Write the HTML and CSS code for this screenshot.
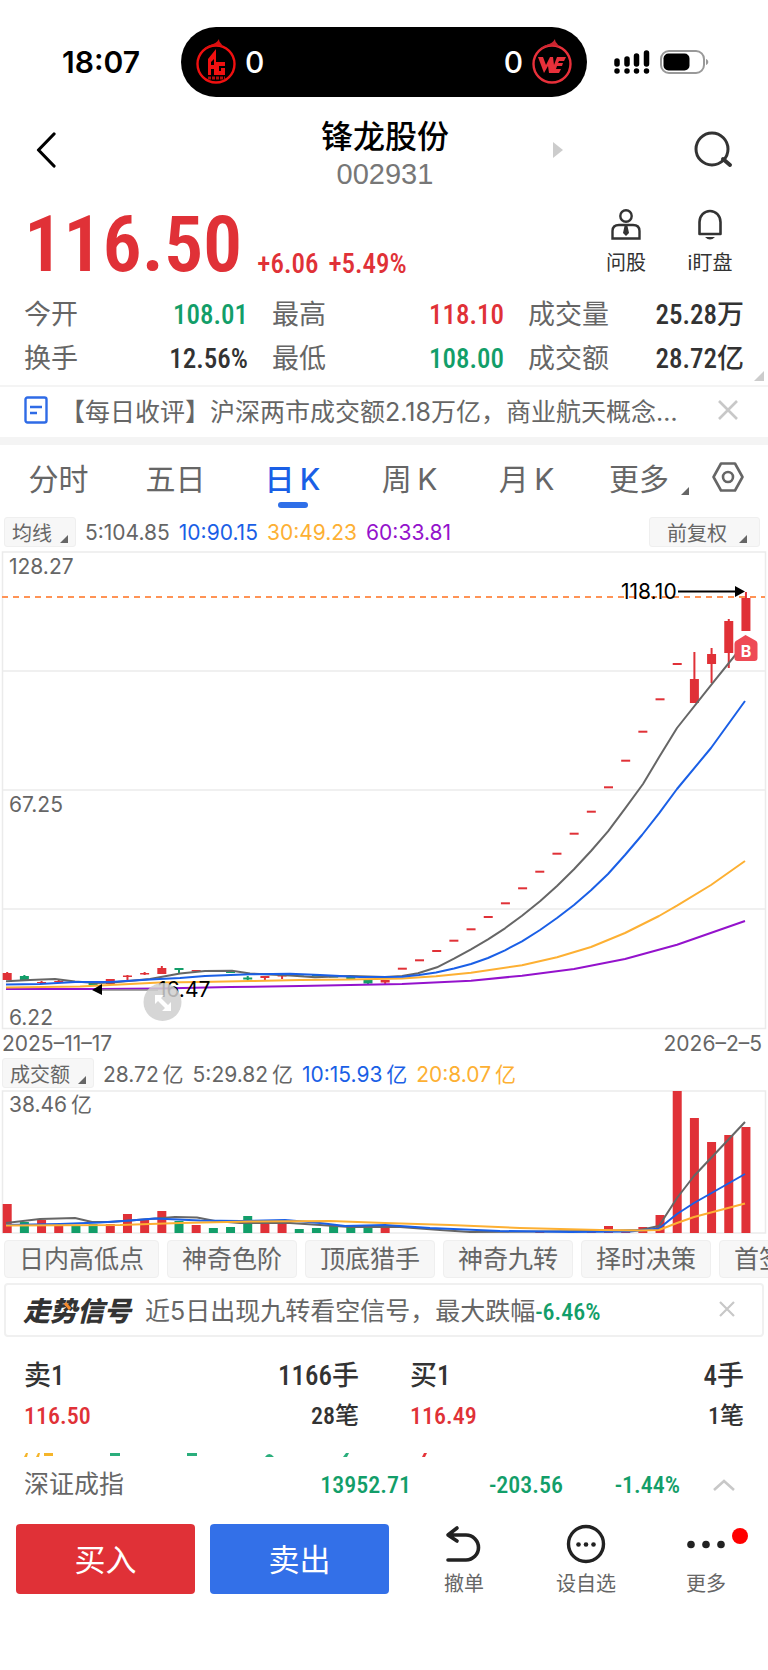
FILE: index.html
```html
<!DOCTYPE html>
<html lang="zh-CN">
<head>
  <meta charset="UTF-8">
  <meta name="viewport" content="width=device-width, initial-scale=1.0">
  <title>锋龙股份 002931</title>
  <link rel="stylesheet" href="styles.css">
</head>
<body>
  <div class="status-bar">
    <div class="time">18:07</div>
    <div class="island">
      <svg class="team" viewBox="0 0 42 46">
        <circle cx="21" cy="25" r="18.5" fill="none" stroke="#f01010" stroke-width="2.4"/>
        <path d="M8 11C14 4 20 7 24 0c0 4 3 4 4 8-7-3-13-1-20 3z" fill="#d80f0f"/>
        <path d="M13 36V20l8-10v13h9v4h-6v5h2v-3h4v7H19v-6h-3v6zM16 26h3v-6l-3 3z" fill="#f01010"/>
        <path d="M13 39h17" stroke="#b00c0c" stroke-width="3" stroke-dasharray="3 1"/>
      </svg>
      <span>0</span>
      <span class="score-right">0</span>
      <svg class="team" viewBox="0 0 42 46">
        <circle cx="21" cy="25" r="18.5" fill="none" stroke="#e8303a" stroke-width="2.4"/>
        <path d="M8 11C14 4 20 7 24 0c0 4 3 4 4 8-7-3-13-1-20 3z" fill="#c92530"/>
        <path d="M7 18h5l3 8 4-8h3l1 8 3-8h9l-2 4h-5l-1 2h5l-1 3h-5l-1 3h5l-2 4H18l-1-7-4 7z" fill="#e8303a"/>
      </svg>
    </div>
    <div class="indicators">
      <svg class="signal" viewBox="0 0 36 24">
        <path d="M3 11v3M13 9v5M22.500 6v8M32.500 3v11M3 21v0M13 21v0M22.500 21v0M32.500 21v0" stroke="#000" stroke-width="5.500" stroke-linecap="round"/>
      </svg>
      <svg class="battery" viewBox="0 0 50 24">
        <rect x="1" y="1" width="43" height="22" rx="8" fill="none" stroke="#999" stroke-width="2"/>
        <rect x="3.500" y="3.500" width="26" height="17" rx="5" fill="#000"/>
        <path d="M46 9c3 1 3 5 0 6z" fill="#999"/>
      </svg>
    </div>
  </div>

  <header class="header">
    <button class="icon-btn back" aria-label="返回">
      <svg width="20" height="36" viewBox="0 0 20 36"><path d="M18 2 2.500 18 18 34" fill="none" stroke="#000" stroke-width="3.200" stroke-linecap="round" stroke-linejoin="round"/></svg>
    </button>
    <div class="title">
      <h1>锋龙股份</h1>
      <div class="code">002931</div>
    </div>
    <div class="header-right">
      <button class="icon-btn" aria-label="下一只"><svg width="10" height="16" viewBox="0 0 10 16"><path d="M0 0 10 8 0 16z" fill="#ccc"/></svg></button>
      <button class="icon-btn" aria-label="搜索">
        <svg width="40" height="38" viewBox="0 0 40 38"><circle cx="18" cy="18" r="16" fill="none" stroke="#333" stroke-width="3"/><path d="m29 28 7 6" stroke="#333" stroke-width="4" stroke-linecap="round"/></svg>
      </button>
    </div>
  </header>

  <section class="quote">
    <div class="price up">116.50</div>
    <div class="change up"><span>+6.06</span><span>+5.49%</span></div>
    <button class="quick">
      <svg width="30" height="32" viewBox="0 0 30 32"><g fill="none" stroke="#333" stroke-width="2.400"><circle cx="15" cy="7" r="5.700"/><path d="M8 16h14q6.500 0 6.500 6v7.500h-27V22q0-6 6.500-6z"/></g><path d="M13.500 17h3l1.500 7-3 3-3-3z" fill="#333"/></svg>
      问股
    </button>
    <button class="quick">
      <svg width="26" height="32" viewBox="0 0 26 32"><path d="M2.500 25V13a10.500 11 0 0 1 21 0v12z" fill="none" stroke="#333" stroke-width="2.600" stroke-linejoin="round"/><path d="M8 28h10q-5 5-10 0z" fill="#333"/></svg>
      i盯盘
    </button>
  </section>

  <dl class="stats">
    <div><dt>今开</dt><dd class="down">108.01</dd></div>
    <div><dt>最高</dt><dd class="up">118.10</dd></div>
    <div><dt>成交量</dt><dd>25.28万</dd></div>
    <div><dt>换手</dt><dd>12.56%</dd></div>
    <div><dt>最低</dt><dd class="down">108.00</dd></div>
    <div class="expandable"><dt>成交额</dt><dd>28.72亿</dd></div>
  </dl>

  <div class="news">
    <svg width="24" height="28" viewBox="0 0 24 28"><rect x="1.500" y="1.500" width="21" height="25" rx="2" fill="none" stroke="#2f6be6" stroke-width="2.400"/><path d="M6 11h12M6 17h7" stroke="#2f6be6" stroke-width="2.400"/></svg>
    <a href="#news">【每日收评】沪深两市成交额2.18万亿，商业航天概念…</a>
    <button class="icon-btn" aria-label="关闭"><svg width="20" height="20" viewBox="0 0 20 20"><path d="m1 1 18 18M19 1 1 19" stroke="#c8c8c8" stroke-width="2.600"/></svg></button>
  </div>

  <nav class="tabs">
    <button>分时</button>
    <button>五日</button>
    <button class="active">日&thinsp;K</button>
    <button>周&thinsp;K</button>
    <button>月&thinsp;K</button>
    <button class="more">更多<i class="corner"></i></button>
    <button class="settings" aria-label="设置">
      <svg width="32" height="30" viewBox="0 0 32 30"><path d="M9 1.500h14L30.500 15 23 28.500H9L1.500 15z" fill="none" stroke="#666" stroke-width="2.600" stroke-linejoin="round"/><circle cx="16" cy="15" r="5" fill="none" stroke="#666" stroke-width="2.600"/></svg>
    </button>
  </nav>

  <div class="legend">
    <button class="picker">均线<i class="corner"></i></button>
    <span>5:104.85</span>
    <span class="blue">10:90.15</span>
    <span class="orange">30:49.23</span>
    <span class="purple">60:33.81</span>
    <button class="picker adjust">前复权<i class="corner"></i></button>
  </div>

  <div class="chart">
    <svg id="kline" viewBox="0 551 768 479">
      <g fill="none" stroke="#ebebeb" stroke-width="1.500">
        <rect x="2.500" y="552" width="763" height="476.500"/>
        <path d="M2 671h763M2 790h763M2 909h763"/>
      </g>
      <path d="M2 597h763" stroke="#ff9355" stroke-width="2" stroke-dasharray="6 5"/>
      <g id="candles"></g>
      <g id="averages" class="lines"></g>
      <g class="axis">
        <text x="9" y="574">128.27</text>
        <text x="9" y="812">67.25</text>
        <text x="9" y="1025">6.22</text>
      </g>
      <g class="extreme">
        <text x="621" y="599">118.10</text>
        <path d="M678 591.500h58" stroke="#000" stroke-width="2"/>
        <path d="m735 586 10 5.500-10 5.500z"/>
        <path d="M102 990h56" stroke="#888" stroke-width="1.500"/>
        <path d="m92 990 10-6v11z"/>
        <text x="158" y="997">16.47</text>
      </g>
      <path d="m745.500 635 9 5q3 1 3 4v14q0 3-3 3h-17q-3 0-3-3v-14q0-3 3-4z" fill="#ee4a55"/>
      <text class="mark" x="746" y="657">B</text>
      <g opacity=".85">
        <circle cx="162.500" cy="1002" r="19" fill="#cfcfcf"/>
        <path d="M155 995h9l-3 3 7 7 3-3v9h-9l3-3-7-7-3 3z" fill="#fff"/>
      </g>
    </svg>
    <div class="dates"><span>2025–11–17</span><span>2026–2–5</span></div>
  </div>

  <div class="legend volume-legend">
    <button class="picker">成交额<i class="corner"></i></button>
    <span>28.72&thinsp;亿</span>
    <span>5:29.82&thinsp;亿</span>
    <span class="blue">10:15.93&thinsp;亿</span>
    <span class="orange">20:8.07&thinsp;亿</span>
  </div>

  <div class="chart">
    <svg id="volume" viewBox="0 1090 768 144">
      <rect x="2.500" y="1091" width="763" height="142" fill="none" stroke="#ebebeb" stroke-width="1.500"/>
      <g id="bars"></g>
      <g id="volumeAverages" class="lines"></g>
      <g class="axis"><text x="9" y="1112">38.46&thinsp;亿</text></g>
    </svg>
  </div>

  <div class="chips">
    <button>日内高低点</button>
    <button>神奇色阶</button>
    <button>顶底猎手</button>
    <button>神奇九转</button>
    <button>择时决策</button>
    <button>首签信号</button>
  </div>

  <div class="signal-card">
    <strong>走势信号</strong>
    <p>近5日出现九转看空信号，最大跌幅<b class="down">-6.46%</b></p>
    <button class="icon-btn" aria-label="关闭"><svg width="16" height="16" viewBox="0 0 16 16"><path d="m1 1 14 14M15 1 1 15" stroke="#c8c8c8" stroke-width="2.200"/></svg></button>
  </div>

  <section class="orders">
    <div class="order">
      <div class="order-top"><span>卖1</span><span>1166手</span></div>
      <div class="order-bottom"><span class="up">116.50</span><span>28笔</span></div>
    </div>
    <div class="order">
      <div class="order-top"><span>买1</span><span>4手</span></div>
      <div class="order-bottom"><span class="up">116.49</span><span>1笔</span></div>
    </div>
  </section>

  <svg class="peek" viewBox="0 0 768 4">
    <path d="m24 4 2-4h2l-1 4zM36 4l2-4h2l-1 4zM44 0h9v3h-9z" fill="#f5b52a"/>
    <path d="M110 0h10v3h-10zM187 0h10v3h-10zM265 4q4-6 9 0zM343 4l3-4h3l-2 4z" fill="#2aae7c"/>
    <path d="m422 4 2-4h3l-2 4z" fill="#e5343a"/>
  </svg>

  <div class="index">
    <span class="index-name">深证成指</span>
    <span class="down">13952.71</span>
    <span class="down">-203.56</span>
    <span class="down">-1.44%</span>
    <button class="icon-btn" aria-label="展开"><svg width="22" height="12" viewBox="0 0 22 12"><path d="m1 11 10-9 10 9" fill="none" stroke="#c8c8c8" stroke-width="2.600"/></svg></button>
  </div>

  <footer class="actions">
    <button class="trade buy">买入</button>
    <button class="trade sell">卖出</button>
    <button class="action">
      <svg width="40" height="40" viewBox="0 0 40 40"><path d="M4 36h18a12.500 12.500 0 0 0 0-25H4m9-7-9 7 9 6" fill="none" stroke="#222" stroke-width="3.600" stroke-linecap="round" stroke-linejoin="round"/></svg>
      撤单
    </button>
    <button class="action">
      <svg width="40" height="40" viewBox="0 0 40 40"><circle cx="20" cy="20" r="17.500" fill="none" stroke="#222" stroke-width="3.400"/><g fill="#222"><circle cx="12.500" cy="20.500" r="2.300"/><circle cx="20" cy="20.500" r="2.300"/><circle cx="27.500" cy="20.500" r="2.300"/></g></svg>
      设自选
    </button>
    <button class="action">
      <svg width="40" height="40" viewBox="0 0 40 40"><g fill="#222"><circle cx="5" cy="20.500" r="3.800"/><circle cx="20" cy="20.500" r="3.800"/><circle cx="35" cy="20.500" r="3.800"/></g></svg>
      更多
      <i class="badge"></i>
    </button>
  </footer>

  <script src="chart.js"></script>
</body>
</html>
```
FILE: styles.css
```css
* {
  box-sizing: border-box;
}

body {
  margin: 0;
  background: #fff;
  color: #333;
  font-family: Inter, "Noto Sans CJK SC", sans-serif;
  overflow-x: hidden;
}

button {
  margin: 0;
  padding: 0;
  border: none;
  background: none;
  color: inherit;
  font: inherit;
  cursor: pointer;
}

svg {
  display: block;
}

.up {
  color: #e03137;
}

.down {
  color: #129e69;
}

.icon-btn {
  display: flex;
}

/* status bar */
.status-bar {
  display: grid;
  grid-template-columns: 1fr 406px 1fr;
  align-items: center;
  padding: 27px 0 10px;
  color: #000;
}

.time {
  padding-left: 62px;
  font-size: 30px;
  font-weight: 600;
}

.island {
  display: flex;
  align-items: center;
  gap: 8px;
  height: 70px;
  padding: 0 14px;
  border-radius: 35px;
  background: #000;
  color: #fff;
  font-size: 30px;
  font-weight: 500;
}

.team {
  width: 42px;
  height: 46px;
}

.score-right {
  margin-left: auto;
}

.indicators {
  display: flex;
  gap: 10px;
  padding-left: 27px;
}

.signal {
  width: 36px;
  height: 24px;
}

.battery {
  width: 50px;
  height: 24px;
}

/* header */
.header {
  display: grid;
  grid-template-columns: 1fr auto 1fr;
  align-items: center;
  padding: 2px 34px 0 36px;
}

.title {
  padding-top: 8px;
  text-align: center;
}

h1 {
  margin: 0;
  color: #000;
  font-size: 32px;
  font-weight: 500;
  line-height: 40px;
}

.code {
  color: #777;
  font-family: "Liberation Sans", sans-serif;
  font-size: 29px;
  line-height: 34px;
}

.header-right {
  display: flex;
  align-items: center;
  justify-content: space-between;
  padding-left: 104px;
}

/* price */
.quote {
  display: flex;
  align-items: flex-end;
  padding: 10px 16px 4px 24px;
}

.price,
.change,
.stats dd,
.order,
.index,
.signal-card b {
  font-family: "Roboto Condensed", "Liberation Sans Narrow", "Noto Sans CJK SC", sans-serif;
  font-weight: 500;
}

.price {
  font-size: 78px;
  font-weight: 600;
  line-height: 88px;
}

.change {
  display: flex;
  flex: 1;
  gap: 10px;
  padding: 0 0 3px 15px;
  font-size: 27px;
  line-height: 44px;
}

.quick {
  display: flex;
  flex-direction: column;
  align-items: center;
  width: 84px;
  padding-bottom: 10px;
  font-size: 20px;
  line-height: 32px;
}

.quick svg {
  margin-bottom: 6px;
}

/* key numbers */
.stats {
  display: grid;
  grid-template-columns: 224fr 232fr 216fr;
  column-gap: 24px;
  margin: 0;
  padding: 0 24px 4px;
  border-bottom: 2px solid #f4f4f4;
}

.stats div {
  display: flex;
  justify-content: space-between;
  line-height: 44px;
}

.stats dt {
  color: #666;
  font-size: 27px;
}

.stats dd {
  margin: 0;
  font-size: 27px;
}

.expandable {
  position: relative;
}

.expandable::after {
  content: "";
  position: absolute;
  right: -20px;
  bottom: 0;
  border: 5px solid #ccc;
  border-top-color: transparent;
  border-left-color: transparent;
}

/* news line */
.news {
  display: flex;
  align-items: center;
  height: 58px;
  padding: 0 30px 4px 24px;
  border-bottom: 8px solid #f4f4f4;
}

.news a {
  flex: 1;
  padding-left: 12px;
  color: #666;
  font-size: 25px;
  text-decoration: none;
  white-space: nowrap;
}

/* period tabs */
.tabs {
  display: grid;
  grid-template-columns: repeat(6, 117fr) 66fr;
  height: 70px;
}

.tabs button {
  position: relative;
  display: flex;
  align-items: center;
  justify-content: center;
  padding-bottom: 6px;
  color: #666;
  font-size: 30px;
}

.tabs .active {
  color: #1a5fe6;
  font-weight: 500;
}

.active::after {
  content: "";
  position: absolute;
  bottom: 7px;
  width: 30px;
  height: 6px;
  border-radius: 3px;
  background: #2f6fe8;
}

.tabs .more {
  justify-content: flex-start;
  padding-left: 24px;
}

.tabs .settings {
  justify-content: flex-start;
  padding-left: 10px;
}

.corner {
  width: 0;
  height: 0;
  border: 4px solid #666;
  border-top-color: transparent;
  border-left-color: transparent;
}

.tabs .corner {
  align-self: flex-end;
  margin: 0 0 14px 12px;
}

/* average legends */
.legend {
  display: flex;
  align-items: center;
  gap: 9px;
  height: 34px;
  margin-bottom: 2px;
  padding: 0 8px 0 4px;
  color: #666;
  font-size: 21px;
}

.legend .blue {
  color: #1a5fe6;
}

.legend .orange {
  color: #fdb033;
}

.legend .purple {
  color: #9412cc;
}

.picker {
  display: flex;
  align-items: center;
  gap: 8px;
  height: 30px;
  padding: 0 7px;
  border: 1px solid #efefef;
  border-radius: 3px;
  background: #f7f7f7;
  font-size: 20px;
  white-space: nowrap;
}

.picker .corner {
  align-self: flex-end;
  margin-bottom: 3px;
}

.adjust {
  gap: 12px;
  margin-left: auto;
  padding: 0 12px 0 17px;
}

.volume-legend {
  height: 30px;
  padding-left: 2px;
}

/* charts */
.chart svg {
  width: 100%;
}

.lines path {
  fill: none;
  stroke-width: 2;
  stroke-linejoin: round;
}

.axis {
  fill: #666;
  font-size: 21px;
}

.extreme {
  fill: #000;
  font-size: 21px;
}

.mark {
  fill: #fff;
  font-size: 16px;
  font-weight: bold;
  text-anchor: middle;
}

.dates {
  display: flex;
  justify-content: space-between;
  padding: 0 6px 0 2px;
  color: #666;
  font-size: 21px;
  line-height: 28px;
}

/* indicator chips */
.chips {
  display: flex;
  gap: 8px;
  padding: 6px 0 5px 4px;
  overflow: hidden;
}

.chips button {
  flex: none;
  height: 38px;
  padding: 0 14px;
  border: 1px solid #efefef;
  border-radius: 4px;
  background: #f7f7f7;
  color: #666;
  font-size: 25px;
  line-height: 36px;
}

.signal-card {
  display: flex;
  align-items: center;
  height: 54px;
  margin: 0 4px;
  padding: 0 27px 2px 17px;
  border: 2px solid #f0f0f0;
  border-radius: 4px;
}

.signal-card strong {
  position: relative;
  font-size: 27px;
  font-style: italic;
  font-weight: 900;
}

/* orange stroke over the second character */
.signal-card strong::after {
  content: "";
  position: absolute;
  top: 12px;
  left: 43px;
  width: 3px;
  height: 8px;
  background: #f58a2c;
  transform: rotate(-40deg);
}

.signal-card p {
  flex: 1;
  margin: 0;
  padding-left: 14px;
  color: #666;
  font-size: 25px;
  white-space: nowrap;
}

.signal-card b {
  font-size: 24px;
}

/* order book */
.orders {
  display: grid;
  grid-template-columns: 335fr 334fr;
  gap: 51px;
  padding: 18px 24px;
}

.order-top,
.order-bottom {
  display: flex;
  justify-content: space-between;
  font-size: 27px;
  line-height: 42px;
}

.order-bottom {
  font-size: 24px;
  line-height: 38px;
}

.peek {
  width: 100%;
}

.index {
  display: grid;
  grid-template-columns: 1fr 152px 152px 117px 55px;
  align-items: center;
  padding: 0 33px 0 24px;
  font-size: 24px;
  line-height: 56px;
  text-align: right;
}

.index-name {
  color: #666;
  font-size: 25px;
  font-weight: normal;
  text-align: left;
}

.index .icon-btn {
  justify-content: flex-end;
}

/* bottom actions */
.actions {
  display: grid;
  grid-template-columns: 179fr 179fr 120fr 94fr 116fr;
  column-gap: 15px;
  padding: 11px 4px 76px 16px;
}

.trade {
  height: 70px;
  padding-bottom: 3px;
  border-radius: 4px;
  color: #fff;
  font-size: 31px;
}

.buy {
  background: #e03137;
}

.sell {
  background: #3370e8;
}

.action {
  position: relative;
  display: flex;
  flex-direction: column;
  align-items: center;
  color: #666;
  font-size: 20px;
  line-height: 30px;
}

.action svg {
  margin-bottom: 5px;
}

.badge {
  position: absolute;
  top: 4px;
  right: 16px;
  width: 16px;
  height: 16px;
  border-radius: 50%;
  background: #f00;
}
```
FILE: chart.js
```js
const RED = '#e03137';
const GREEN = '#129e69';
const STEP = 17.18;
const BAR = 9;

// [color, body top, body bottom, wick top, wick bottom]
const candles = [
  ['r', 973, 980, 972, 980], ['g', 976, 980, 975, 980], ['r', 982, 983, 981, 983],
  ['r', 981, 982, 979, 983], ['g', 982, 983, 982, 983], ['g', 982, 985, 982, 985],
  ['r', 979, 984, 979, 984], ['r', 975.5, 977, 975, 980], ['r', 973, 974.5, 972, 975],
  ['r', 968, 974, 966, 974], ['g', 968, 970, 968, 973], ['r', 970, 971.5, 970, 971],
  ['g', 970, 971.5, 970, 971], ['g', 971.5, 973, 971, 973], ['g', 977.5, 979.5, 976, 981],
  ['r', 976, 978, 976, 981], ['r', 975, 976.5, 975, 979], ['g', 974, 975.5, 974, 975],
  ['g', 975, 976.5, 975, 976], ['g', 976, 977.5, 976, 977], ['g', 977, 979, 977, 979],
  ['g', 980, 983.5, 980, 984], ['r', 980, 982.5, 980, 984]
];

// limit-up days open and close on one price
[968.7, 960.3, 951, 940.7, 929.3, 917, 903.3, 888.3, 871.7, 853.7, 833.7,
  811.7, 787.3, 760.7, 731.7, 699.3, 664].forEach(y => {
  candles.push(['r', y - 1, y + 1, y, y]);
});

candles.push(
  ['r', 679, 703, 652, 703],
  ['r', 654, 664, 648, 683],
  ['r', 621, 653, 619, 668],
  ['r', 598, 631, 592, 631]
);

const volumes = [29, 11, 13, 7, 8, 9, 9, 19, 14, 22, 12, 8, 5, 6, 17, 10, 10, 4,
  5, 7, 6, 5, 6, 0, 0, 0, 0, 0, 0, 0, 0, 2, 0, 0, 2, 7, 1, 6, 18, 142, 115, 91, 98, 106];

const averages = {
  '#9412cc': [6, 989, 100, 989, 160, 988.5, 230, 987, 300, 986, 350, 985, 402, 984, 471, 980.7,
    522, 975.7, 574, 969, 625, 959, 677, 944.7, 745, 921],
  '#fdb033': [6, 987.5, 80, 986.5, 120, 984.5, 160, 982.5, 200, 982, 250, 981, 300, 980, 350, 979.5,
    402, 978.5, 436, 976.3, 471, 972.7, 522, 965.3, 557, 957.3, 591, 947, 625, 933, 659, 916,
    677, 905.7, 711, 885, 745, 861],
  '#666': [6, 981.3, 30, 980, 55, 979, 75, 981.5, 96, 983, 112, 982.5, 150, 979, 180, 973.5, 205, 971,
    232, 970.7, 250, 973.5, 290, 975.5, 315, 977.3, 350, 976, 385, 977, 402, 976, 418, 973.3,
    437, 967.3, 454, 958.7, 471, 949.3, 488, 939.3, 505, 928.3, 522, 915.7, 540, 901.3, 557, 886,
    574, 869.3, 591, 851, 608, 831.3, 625, 808.7, 643, 784, 659, 757.3, 677, 728, 714, 681.3, 745, 643],
  '#1a5fe6': [6, 984.5, 40, 984, 75, 982, 110, 982, 150, 979.5, 180, 978, 205, 976, 250, 974.3,
    290, 973.7, 320, 975, 360, 977, 402, 976.7, 419, 975, 436, 972.5, 454, 968.5, 471, 964, 488, 958,
    505, 950.3, 522, 941.3, 540, 930, 557, 918, 574, 905, 591, 890.3, 608, 874, 625, 855, 642, 835,
    659, 813.3, 677, 789, 711, 748, 745, 701]
};

const volumeAverages = {
  '#666': [6, 1223, 40, 1219, 75, 1218, 92, 1222, 110, 1222, 150, 1219, 175, 1217, 197, 1217.5,
    215, 1221, 240, 1223, 290, 1223, 320, 1225, 350, 1227, 400, 1227, 440, 1230, 470, 1232,
    600, 1231, 640, 1230, 659, 1226, 677, 1198, 694, 1176, 745, 1122],
  '#1a5fe6': [6, 1225, 60, 1224, 100, 1222.5, 130, 1220.5, 155, 1218.5, 200, 1220.5, 240, 1221,
    285, 1220, 320, 1223, 345, 1226, 385, 1225, 430, 1228, 500, 1231, 570, 1232, 630, 1231.5,
    659, 1228.5, 677, 1214, 694, 1203, 745, 1174],
  '#fdb033': [6, 1225.5, 120, 1225, 180, 1223, 250, 1221.5, 330, 1221, 385, 1223, 450, 1225,
    520, 1228, 600, 1230, 640, 1230.5, 659, 1230, 677, 1223, 694, 1217, 745, 1203.5]
};

function rect(x, y, w, h, fill) {
  return `<rect x="${x}" y="${y}" width="${w}" height="${h}" fill="${fill}"/>`;
}

function drawLines(id, lines) {
  document.getElementById(id).innerHTML = Object.entries(lines)
    .map(([color, points]) => `<path d="M${points.join(' ')}" stroke="${color}"/>`)
    .join('');
}

document.getElementById('candles').innerHTML = candles.map(([c, top, bottom, high, low], i) => {
  const x = 7.2 + i * STEP;
  const fill = c === 'r' ? RED : GREEN;
  return rect(x - BAR / 2, top, BAR, bottom - top, fill) + rect(x - 1, high, 2, low - high, fill);
}).join('');

document.getElementById('bars').innerHTML = volumes.map((h, i) => {
  const fill = candles[i][0] === 'r' ? RED : GREEN;
  return rect(7.2 + i * STEP - BAR / 2, 1233 - h, BAR, h, fill);
}).join('');

drawLines('averages', averages);
drawLines('volumeAverages', volumeAverages);
```
